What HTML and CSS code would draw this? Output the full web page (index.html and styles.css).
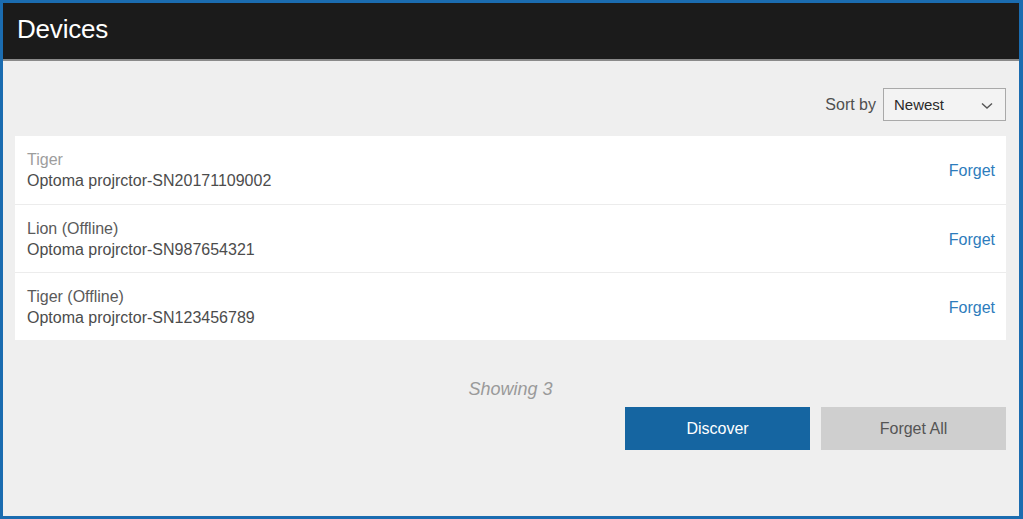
FILE: index.html
```html
<!DOCTYPE html>
<html>
<head>
<meta charset="utf-8">
<link rel="stylesheet" href="styles.css">
</head>
<body>
<div class="frame">
  <header class="header">
    <h1 class="title">Devices</h1>
  </header>
  <main class="content">
    <div class="sort-row">
      <span class="sort-label">Sort by</span>
      <div class="select">
        <span>Newest</span>
        <svg class="chev" width="12" height="8" viewBox="0 0 12 8"><path d="M1 1.5 L6 6 L11 1.5" fill="none" stroke="#555" stroke-width="1.4"/></svg>
      </div>
    </div>
    <ul class="list">
      <li class="row">
        <div class="info">
          <div class="name muted">Tiger</div>
          <div class="model">Optoma projrctor-SN20171109002</div>
        </div>
        <a class="forget">Forget</a>
      </li>
      <li class="row">
        <div class="info">
          <div class="name">Lion (Offline)</div>
          <div class="model">Optoma projrctor-SN987654321</div>
        </div>
        <a class="forget">Forget</a>
      </li>
      <li class="row">
        <div class="info">
          <div class="name">Tiger (Offline)</div>
          <div class="model">Optoma projrctor-SN123456789</div>
        </div>
        <a class="forget">Forget</a>
      </li>
    </ul>
    <div class="showing">Showing 3</div>
    <div class="actions">
      <button class="btn primary">Discover</button>
      <button class="btn secondary">Forget All</button>
    </div>
  </main>
</div>
</body>
</html>
```
FILE: styles.css
```css
* { box-sizing: border-box; }
html, body { margin: 0; padding: 0; }
body {
  width: 1023px;
  height: 519px;
  font-family: "Liberation Sans", Arial, sans-serif;
  overflow: hidden;
}
.frame {
  width: 1023px;
  height: 519px;
  border: 3px solid #1b6cb0;
  border-right-width: 4px;
  background: #efefef;
  display: flex;
  flex-direction: column;
}
.header {
  height: 58px;
  background: #1b1b1b;
  border-bottom: 2px solid #8a8a8a;
  display: flex;
  align-items: center;
  padding-left: 14px;
  padding-bottom: 4px;
}
.title {
  margin: 0;
  color: #fff;
  font-size: 26px;
  font-weight: normal;
  letter-spacing: -0.2px;
}
.content {
  padding: 27px 13px 0 12px;
  display: flex;
  flex-direction: column;
}
.sort-row {
  display: flex;
  justify-content: flex-end;
  align-items: center;
  gap: 7px;
}
.sort-label {
  font-size: 16px;
  color: #505050;
}
.select {
  width: 123px;
  height: 33px;
  border: 1px solid #a9a9a9;
  background: #f3f3f3;
  display: flex;
  align-items: center;
  justify-content: space-between;
  padding: 0 12px 0 10px;
  font-size: 15px;
  color: #2a2a2a;
}
.chev { margin-top: 2px; }
.list {
  list-style: none;
  margin: 15px 0 0 0;
  padding: 0;
  background: #fff;
}
.row {
  height: 68px;
  display: flex;
  align-items: center;
  justify-content: space-between;
  padding: 0 11px 0 12px;
  border-top: 1px solid #ececec;
}
.row:first-child { border-top: none; }
.info { display: flex; flex-direction: column; gap: 3px; padding-top: 1px; }
.name { font-size: 16px; color: #5a5a5a; }
.name.muted { color: #9d9d9d; }
.model { font-size: 16px; color: #4c4c4c; }
.forget {
  font-size: 16px;
  color: #2d7cbc;
  cursor: pointer;
  padding-top: 2px;
}
.showing {
  text-align: center;
  font-style: italic;
  font-size: 18px;
  color: #9a9a9a;
  margin-top: 39px;
}
.actions {
  display: flex;
  justify-content: flex-end;
  gap: 11px;
  margin-top: 7px;
}
.btn {
  width: 185px;
  height: 43px;
  border: none;
  font-family: "Liberation Sans", Arial, sans-serif;
  font-size: 16px;
  padding: 0;
}
.btn.primary { background: #1565a1; color: #fff; }
.btn.secondary { background: #cfcfcf; color: #555; }
```
